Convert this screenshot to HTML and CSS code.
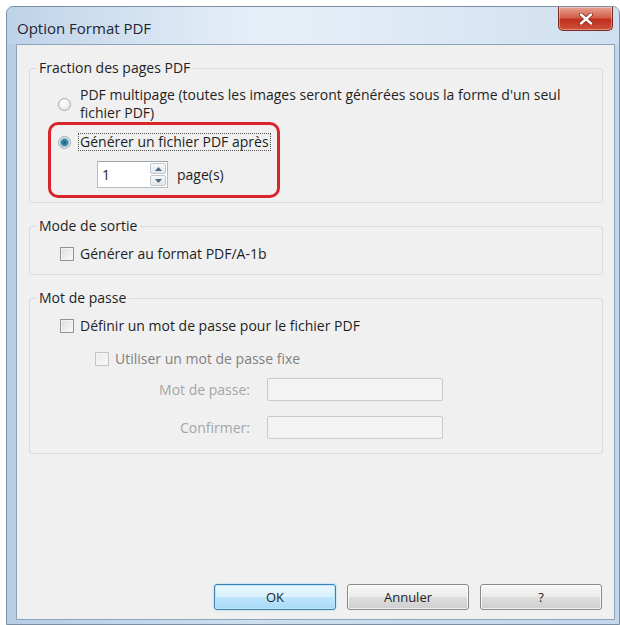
FILE: index.html
```html
<!DOCTYPE html>
<html lang="fr">

<head>
  <meta charset="UTF-8">
  <meta name="viewport" content="width=device-width, initial-scale=1.0">
  <title>Option Format PDF</title>
  <link rel="stylesheet" href="styles.css">
</head>

<body>
  <div class="window">
    <div class="titlebar">
      <span class="title">Option Format PDF</span>
      <button class="close" title="Fermer">
        <svg width="14" height="12" viewBox="0 0 14 12">
          <path d="M2 1.5 L12 10.5 M12 1.5 L2 10.5" stroke="#7a2a22" stroke-width="4" stroke-linecap="round" />
          <path d="M2 1.5 L12 10.5 M12 1.5 L2 10.5" stroke="#fff" stroke-width="2.4" stroke-linecap="round" />
        </svg>
      </button>
    </div>

    <div class="client">
      <fieldset class="group">
        <legend>Fraction des pages PDF</legend>
        <div class="group-body fraction">
          <label class="opt opt-multi">
            <span class="radio"></span>
            <span class="multi-text">
              <span class="line">PDF multipage (toutes les images seront générées sous la forme d'un seul</span>
              <span class="line">fichier PDF)</span>
            </span>
          </label>
          <div class="highlight">
            <label class="opt">
              <span class="radio checked"></span>
              <span class="focus">Générer un fichier PDF après</span>
            </label>
            <div class="spin-row">
              <div class="spin">
                <span class="spin-value">1</span>
                <div class="spin-btns">
                  <span class="spin-btn"><svg width="7" height="4" viewBox="0 0 7 4"><path d="M0 4 L3.5 0 L7 4Z" fill="#4d6a85" /></svg></span>
                  <span class="spin-btn"><svg width="7" height="4" viewBox="0 0 7 4"><path d="M0 0 L3.5 4 L7 0Z" fill="#4d6a85" /></svg></span>
                </div>
              </div>
              <span>page(s)</span>
            </div>
          </div>
        </div>
      </fieldset>

      <fieldset class="group">
        <legend>Mode de sortie</legend>
        <div class="group-body output">
          <label class="opt">
            <span class="check"></span>
            <span>Générer au format PDF/A-1b</span>
          </label>
        </div>
      </fieldset>

      <fieldset class="group">
        <legend>Mot de passe</legend>
        <div class="group-body password">
          <label class="opt">
            <span class="check"></span>
            <span>Définir un mot de passe pour le fichier PDF</span>
          </label>
          <label class="opt opt-sub disabled">
            <span class="check"></span>
            <span>Utiliser un mot de passe fixe</span>
          </label>
          <div class="field-row first">
            <span class="field-label">Mot de passe:</span>
            <span class="field"></span>
          </div>
          <div class="field-row">
            <span class="field-label">Confirmer:</span>
            <span class="field"></span>
          </div>
        </div>
      </fieldset>

      <div class="buttons">
        <button class="btn default">OK</button>
        <button class="btn">Annuler</button>
        <button class="btn">?</button>
      </div>
    </div>
  </div>
</body>

</html>
```

FILE: styles.css
```css
* {
  margin: 0;
  padding: 0;
  box-sizing: border-box;
}

body {
  font-family: 'Open Sans', 'Noto Sans', sans-serif;
  font-size: 14px;
  color: #1f1f1f;
  background: #fff;
  overflow: hidden;
}

/* window frame */
.window {
  margin: 6px 0 0 6px;
  width: 614px;
  height: 619px;
  padding: 0 4px 4px 9px;
  border: 1px solid #7b8ea4;
  border-radius: 7px 7px 0 0;
  background: linear-gradient(90deg, #b6cde6 0%, #cddff0 40%, #c3d7ec 100%);
  display: flex;
  flex-direction: column;
}

.titlebar {
  height: 37px;
  display: flex;
  justify-content: space-between;
  align-items: flex-start;
  background: linear-gradient(90deg, rgba(255, 255, 255, 0.1), rgba(255, 255, 255, 0.5) 45%, rgba(255, 255, 255, 0.2));
  margin: 0 -4px 0 -9px;
  padding: 0 6px 0 10px;
}

.title {
  margin-top: 11px;
  font-size: 15px;
  line-height: 20px;
  color: #1e2530;
}

.close {
  width: 55px;
  height: 24px;
  border: 1px solid #7d2b22;
  border-top: none;
  border-radius: 0 0 5px 5px;
  background: linear-gradient(#e9a394 0%, #d4604b 45%, #bf2f1c 55%, #d0533b 100%);
  display: flex;
  align-items: center;
  justify-content: center;
  box-shadow: inset 0 0 0 1px rgba(255, 255, 255, 0.35);
}

.client {
  flex: 1;
  border: 1px solid #8ea3ba;
  background: #f0f0f0;
  display: flex;
  flex-direction: column;
  padding-bottom: 9px;
}

/* group boxes */
.group {
  margin: 14px 11px 0 12px;
  border: 1px solid #d5dbe0;
  border-radius: 3px;
}

.group legend {
  margin-left: 6px;
  padding: 0 3px;
  line-height: 18px;
}

.group-body {
  padding: 10px 10px 11px 30px;
}

.group-body.fraction {
  padding: 9px 10px 4px 18px;
}

.group-body.password {
  padding-bottom: 14px;
}

.opt {
  display: flex;
  align-items: center;
  height: 18px;
  line-height: 18px;
}

.opt-multi {
  height: 36px;
  margin-left: 10px;
}

.multi-text {
  display: flex;
  flex-direction: column;
  line-height: 18px;
}

.opt-sub {
  margin-top: 15px;
  margin-left: 35px;
}

.disabled {
  color: #808080;
}

/* radio buttons and check boxes */
.radio {
  flex: none;
  width: 13px;
  height: 13px;
  margin-right: 9px;
  border: 1px solid #a4a9ad;
  border-radius: 50%;
  background: radial-gradient(circle at 40% 35%, #fff, #e1e3e6);
}

.radio.checked {
  margin-right: 7px;
  background: radial-gradient(circle, #1c5a77 0, #3d8aa8 3px, #7fb8cf 4px, #e4e8eb 5px);
}

.check {
  flex: none;
  width: 14px;
  height: 14px;
  margin-right: 6px;
  border: 1px solid #8f9296;
  background: linear-gradient(135deg, #dcdcdc, #fbfbfb);
  box-shadow: inset 0 0 0 1px #f4f4f4;
}

.disabled .check {
  border-color: #c3c5c8;
  background: linear-gradient(135deg, #eaeaea, #fafafa);
}

.focus {
  padding: 0 1px;
  border: 1px dotted #555;
  line-height: 16px;
}

/* red annotation around the page-split option */
.highlight {
  width: 232px;
  margin-top: 0;
  padding: 8px 0 7px 7px;
  border: 3px solid #d8252b;
  border-radius: 10px;
}

.spin-row {
  display: flex;
  align-items: center;
  margin: 10px 0 0 39px;
}

.spin {
  display: flex;
  width: 71px;
  height: 27px;
  margin-right: 9px;
  border: 1px solid #b6bcc4;
  border-top-color: #9aa2ac;
  background: #fff;
}

.spin-value {
  flex: 1;
  padding: 3px 0 0 4px;
}

.spin-btns {
  width: 18px;
  display: flex;
  flex-direction: column;
  gap: 1px;
  padding: 1px;
}

.spin-btn {
  flex: 1;
  display: flex;
  align-items: center;
  justify-content: center;
  border: 1px solid #c2c8cf;
  border-radius: 2px;
  background: linear-gradient(#f7f8f9, #e2e6ea);
}

/* password fields */
.field-row {
  display: flex;
  align-items: center;
  margin-top: 15px;
  color: #a6a6a6;
}

.field-row.first {
  margin-top: 10px;
}

.field-label {
  width: 190px;
  text-align: right;
  margin-right: 17px;
}

.field {
  width: 176px;
  height: 23px;
  border: 1px solid #c8cacc;
  border-radius: 2px;
  background: #f3f3f3;
}

/* dialog buttons */
.buttons {
  margin-top: auto;
  display: flex;
  justify-content: flex-end;
  gap: 11px;
  padding-right: 12px;
}

.btn {
  width: 122px;
  height: 26px;
  font-family: inherit;
  font-size: 13px;
  color: #222;
  border: 1px solid #8a8a8a;
  border-radius: 3px;
  background: linear-gradient(#f6f6f6 0%, #ebebeb 50%, #dddddd 51%, #cfcfcf 100%);
  box-shadow: inset 0 0 0 1px rgba(255, 255, 255, 0.7);
}

.btn.default {
  border-color: #3c7fb1;
  background: linear-gradient(#eaf6fd 0%, #d9f0fc 50%, #bee6fd 51%, #a7d9f5 100%);
  box-shadow: inset 0 0 0 1px #bde8fa, 0 0 2px #7fd2f2;
}
```
